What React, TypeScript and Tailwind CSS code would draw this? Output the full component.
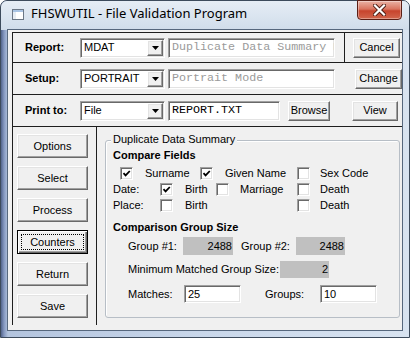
import React from "react";

const raised =
  "bg-[#f0f0f0] border border-t-white border-l-white border-r-[#696969] border-b-[#696969] shadow-[inset_-1px_-1px_0_#a0a0a0,inset_1px_1px_0_#e3e3e3]";
const focusedRaised =
  "bg-[#f0f0f0] border border-black shadow-[inset_1px_1px_0_#ffffff,inset_-1px_-1px_0_#696969,inset_-2px_-2px_0_#a0a0a0]";
const sunken =
  "border border-t-[#a0a0a0] border-l-[#a0a0a0] border-r-white border-b-white shadow-[inset_1px_1px_0_#696969,inset_-1px_-1px_0_#e3e3e3]";

function Btn({
  children,
  className = "",
  focused = false,
}: {
  children: React.ReactNode;
  className?: string;
  focused?: boolean;
}) {
  if (focused) {
    return (
      <div className={`${focusedRaised} p-[3px] flex ${className}`}>
        <div className="flex-1 flex items-center justify-center border border-dotted border-black text-[11px] leading-none">
          {children}
        </div>
      </div>
    );
  }
  return (
    <div
      className={`${raised} flex items-center justify-center text-[11px] leading-none ${className}`}
    >
      {children}
    </div>
  );
}

function Arrow() {
  return (
    <svg width="7" height="4" viewBox="0 0 7 4">
      <path d="M0 0H7L3.5 4Z" fill="#000" />
    </svg>
  );
}

function Combo({ value }: { value: string }) {
  return (
    <div className={`w-[85px] h-[20px] bg-white ${sunken} p-[1px] flex items-center shrink-0`}>
      <span className="flex-1 pl-[2px] text-[11px] leading-none whitespace-nowrap">{value}</span>
      <div className={`w-[16px] h-[16px] ${raised} flex items-center justify-center`}>
        <Arrow />
      </div>
    </div>
  );
}

function Field({
  value,
  className = "",
  disabled = false,
}: {
  value: string;
  className?: string;
  disabled?: boolean;
}) {
  return (
    <div
      className={`h-[20px] bg-white ${sunken} pl-[3px] flex items-center overflow-hidden whitespace-nowrap shrink-0 font-['Liberation_Mono',monospace] text-[11.7px] leading-none ${
        disabled ? "text-[#9a9a9a]" : "text-black"
      } ${className}`}
    >
      {value}
    </div>
  );
}

function Cb({ checked = false }: { checked?: boolean }) {
  return (
    <div className={`w-[13px] h-[13px] bg-white ${sunken} flex items-center justify-center shrink-0`}>
      {checked && (
        <svg width="9" height="9" viewBox="0 0 9 9">
          <path d="M1.5 4.2L3.6 6.4L7.8 2" fill="none" stroke="#000" strokeWidth="1.8" />
        </svg>
      )}
    </div>
  );
}

function GrayBox({ value, className = "" }: { value: string; className?: string }) {
  return (
    <div className={`bg-[#c0c0c0] flex items-center justify-end pr-[1px] text-[11px] leading-none ${className}`}>
      {value}
    </div>
  );
}

function WinIcon() {
  return (
    <svg width="12" height="11" viewBox="0 0 12 11">
      <rect x="0.5" y="0.5" width="11" height="10" fill="#ffffff" stroke="#6b7786" />
      <rect x="1" y="1" width="10" height="2" fill="#a9c4e4" />
      <rect x="1" y="3" width="3" height="7" fill="#e6ecf3" />
    </svg>
  );
}

export default function App() {
  return (
    <div className="w-[410px] h-[338px] overflow-hidden bg-white font-['Liberation_Sans',Arial,sans-serif] text-black">
      <div className="w-[410px] h-[338px] rounded-t-[7px] border border-[#3d4b5c] flex flex-col bg-[image:linear-gradient(90deg,#52648c_0px,#8497bf_3px,#b3c4de_7px,#c9d7ea_50%,#d8e3f0_100%)]">
        {/* title bar */}
        <div className="h-[29px] flex items-start rounded-t-[6px] bg-[image:linear-gradient(180deg,#e6edf5_0%,#dbe5f0_50%,#d0dcea_100%)]">
          <div className="pl-[11px] pt-[8px]">
            <WinIcon />
          </div>
          <div className="pl-[7px] pt-[5px] text-[13px] leading-[15px] font-['Noto_Sans',sans-serif] text-black">
            FHSWUTIL - File Validation Program
          </div>
          <div className="ml-auto mr-[7px] -mt-px w-[45px] h-[20px] rounded-b-[4px] border border-[#5b1f16] bg-[image:linear-gradient(180deg,#eab2a5_0%,#d9745f_45%,#c7442d_55%,#d2664d_100%)] flex items-center justify-center shadow-[inset_0_0_0_1px_rgba(255,255,255,0.35)]">
            <svg width="13" height="12" viewBox="0 0 13 12">
              <path d="M2 1.5L11 10.5M11 1.5L2 10.5" stroke="#4a1a12" strokeWidth="4" strokeLinecap="square" />
              <path d="M2 1.5L11 10.5M11 1.5L2 10.5" stroke="#ffffff" strokeWidth="2.2" strokeLinecap="square" />
            </svg>
          </div>
        </div>

        {/* client area */}
        <div className="mx-[7px] h-[300px] bg-[#f0f0f0] shadow-[0_0_0_1px_#56677d] flex flex-col">
          <div className="ml-[4px] mt-[2px] h-[293px] border-t border-l border-[#1e1e1e] flex flex-col">
            {/* Report row */}
            <div className="h-[30px] border-b border-[#1e1e1e] flex items-center pl-[12px]">
              <div className="w-[55px] font-bold text-[11px]">Report:</div>
              <Combo value="MDAT" />
              <Field value="Duplicate Data Summary R" disabled className="ml-[3px] w-[167px]" />
              <div className="ml-[9px] self-stretch w-px bg-[#1e1e1e]" />
              <Btn className="ml-[8px] w-[47px] h-[20px]">Cancel</Btn>
            </div>
            {/* Setup row */}
            <div className="h-[32px] border-b border-[#1e1e1e] flex items-center pl-[12px]">
              <div className="w-[55px] font-bold text-[11px]">Setup:</div>
              <Combo value="PORTRAIT" />
              <Field value="Portrait Mode" disabled className="ml-[3px] w-[167px]" />
              <Btn className="ml-[20px] w-[47px] h-[20px]">Change</Btn>
            </div>
            {/* Print row */}
            <div className="h-[32px] border-b border-[#1e1e1e] flex items-center pl-[12px]">
              <div className="w-[55px] font-bold text-[11px]">Print to:</div>
              <Combo value="File" />
              <Field value="REPORT.TXT" className="ml-[3px] w-[112px]" />
              <Btn className="ml-[8px] w-[42px] h-[20px]">Browse</Btn>
              <Btn className="ml-[22px] w-[46px] h-[20px]">View</Btn>
            </div>

            {/* bottom section */}
            <div className="flex">
              <div className="w-[83px] pl-[4px] pt-[7px] flex flex-col gap-[8px]">
                <Btn className="w-[71px] h-[24px]">Options</Btn>
                <Btn className="w-[71px] h-[24px]">Select</Btn>
                <Btn className="w-[71px] h-[24px]">Process</Btn>
                <Btn className="w-[71px] h-[24px]" focused>
                  Counters
                </Btn>
                <Btn className="w-[71px] h-[24px]">Return</Btn>
                <Btn className="w-[71px] h-[24px]">Save</Btn>
              </div>
              <div className="w-px h-[198px] bg-[#1e1e1e]" />

              {/* group box */}
              <div className="ml-[8px] mt-[13px] w-[295px] h-[178px] relative border border-[#b7bec6] rounded-[3px] shadow-[inset_1px_1px_0_#ffffff] flex flex-col text-[11px] leading-none">
                <div className="absolute left-[5px] top-[-8px] px-[2px] bg-[#f0f0f0] leading-[13px]">
                  Duplicate Data Summary
                </div>

                <div className="mt-[7px] pl-[7px] h-[14px] flex items-center font-bold">Compare Fields</div>

                <div className="mt-[3px] h-[16px] flex items-center">
                  <div className="w-[14px]" />
                  <Cb checked />
                  <div className="pl-[12px] w-[67px]">Surname</div>
                  <Cb checked />
                  <div className="pl-[12px] w-[84px]">Given Name</div>
                  <Cb />
                  <div className="pl-[10px]">Sex Code</div>
                </div>

                <div className="h-[16px] flex items-center">
                  <div className="pl-[7px] w-[54px]">Date:</div>
                  <Cb checked />
                  <div className="pl-[12px] w-[43px]">Birth</div>
                  <Cb />
                  <div className="pl-[11px] w-[68px]">Marriage</div>
                  <Cb />
                  <div className="pl-[10px]">Death</div>
                </div>

                <div className="h-[16px] flex items-center">
                  <div className="pl-[7px] w-[54px]">Place:</div>
                  <Cb />
                  <div className="pl-[12px] w-[124px]">Birth</div>
                  <Cb />
                  <div className="pl-[10px]">Death</div>
                </div>

                <div className="mt-[7px] pl-[7px] h-[14px] flex items-center font-bold">
                  Comparison Group Size
                </div>

                <div className="mt-[3px] h-[18px] flex items-center pl-[22px]">
                  <div className="w-[55px]">Group #1:</div>
                  <GrayBox value="2488" className="w-[50px] h-[18px]" />
                  <div className="ml-[8px] w-[55px]">Group #2:</div>
                  <GrayBox value="2488" className="w-[49px] h-[18px]" />
                </div>

                <div className="mt-[6px] h-[17px] flex items-center pl-[22px]">
                  <div className="w-[152px] whitespace-nowrap">Minimum Matched Group Size:</div>
                  <GrayBox value="2" className="w-[49px] h-[17px]" />
                </div>

                <div className="mt-[7px] h-[18px] flex items-center pl-[22px]">
                  <div className="w-[56px]">Matches:</div>
                  <div className={`w-[57px] h-[18px] bg-white ${sunken} pl-[3px] flex items-center`}>25</div>
                  <div className="ml-[24px] w-[55px]">Groups:</div>
                  <div className={`w-[57px] h-[18px] bg-white ${sunken} pl-[3px] flex items-center`}>10</div>
                </div>
              </div>
            </div>
          </div>
        </div>
      </div>
    </div>
  );
}
